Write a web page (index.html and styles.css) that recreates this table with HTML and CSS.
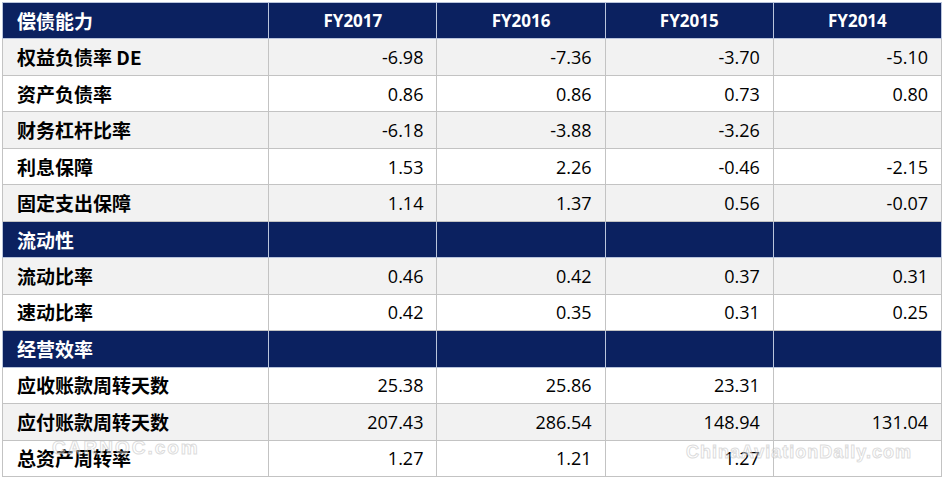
FILE: index.html
```html
<!DOCTYPE html>
<html lang="zh-CN">
<head>
<meta charset="utf-8">
<link rel="stylesheet" href="styles.css">
</head>
<body>
<div class="wrap">
<table class="ratios">
  <colgroup>
    <col class="c-label"><col class="c-year"><col class="c-year"><col class="c-year"><col class="c-year">
  </colgroup>
  <tr class="sec"><th class="lbl">偿债能力</th><th>FY2017</th><th>FY2016</th><th>FY2015</th><th>FY2014</th></tr>
  <tr class="alt"><td class="lbl">权益负债率 DE</td><td>-6.98</td><td>-7.36</td><td>-3.70</td><td>-5.10</td></tr>
  <tr><td class="lbl">资产负债率</td><td>0.86</td><td>0.86</td><td>0.73</td><td>0.80</td></tr>
  <tr class="alt"><td class="lbl">财务杠杆比率</td><td>-6.18</td><td>-3.88</td><td>-3.26</td><td></td></tr>
  <tr><td class="lbl">利息保障</td><td>1.53</td><td>2.26</td><td>-0.46</td><td>-2.15</td></tr>
  <tr class="alt"><td class="lbl">固定支出保障</td><td>1.14</td><td>1.37</td><td>0.56</td><td>-0.07</td></tr>
  <tr class="sec"><th class="lbl">流动性</th><th></th><th></th><th></th><th></th></tr>
  <tr class="alt"><td class="lbl">流动比率</td><td>0.46</td><td>0.42</td><td>0.37</td><td>0.31</td></tr>
  <tr><td class="lbl">速动比率</td><td>0.42</td><td>0.35</td><td>0.31</td><td>0.25</td></tr>
  <tr class="sec"><th class="lbl">经营效率</th><th></th><th></th><th></th><th></th></tr>
  <tr><td class="lbl">应收账款周转天数</td><td>25.38</td><td>25.86</td><td>23.31</td><td></td></tr>
  <tr class="alt"><td class="lbl">应付账款周转天数</td><td>207.43</td><td>286.54</td><td>148.94</td><td>131.04</td></tr>
  <tr><td class="lbl">总资产周转率</td><td>1.27</td><td>1.21</td><td>1.27</td><td></td></tr>
</table>
<span class="wm wm-left">CARNOC.com</span>
<span class="wm wm-right">ChinaAviationDaily.com</span>
</div>
</body>
</html>
```
FILE: styles.css
```css
html, body {
  margin: 0;
  padding: 0;
  background: #ffffff;
}
.wrap {
  position: relative;
  padding: 2px 0 0 2px;
  width: 942px;
  height: 478px;
  overflow: hidden;
}
.ratios {
  border-collapse: collapse;
  table-layout: fixed;
  width: 940px;
  font-family: "Open Sans", "Noto Sans CJK SC", sans-serif;
  font-size: 18px;
  color: #000;
}
.c-label { width: 266px; }
.c-year { width: 168px; }
.ratios td, .ratios th {
  height: 36.48px;
  padding: 0 13px 0 13px;
  border: 1px solid #c3c3c3;
  text-align: right;
  white-space: nowrap;
  line-height: 20px;
  box-sizing: border-box;
}
.ratios td { background: #ffffff; font-weight: 400; }
.ratios tr.alt td { background: #f2f2f2; }
.ratios .lbl {
  text-align: left;
  padding-left: 14px;
  font-family: "Noto Sans CJK SC", sans-serif;
  font-weight: 700;
  font-size: 19px;
}
.ratios tr.sec th {
  background: #0b2160;
  color: #ffffff;
  font-weight: 700;
  text-align: center;
  border-color: #b9c4dc;
  font-size: 17px;
}
.ratios tr.sec th.lbl {
  text-align: left;
  font-size: 19px;
}
.wm {
  position: absolute;
  font-family: "Liberation Sans", sans-serif;
  font-weight: 700;
  line-height: 1;
  color: rgba(255,255,255,0.4);
  -webkit-text-stroke: 1px rgba(185,185,185,0.5);
  pointer-events: none;
}
.wm-left { left: 52px; top: 438px; font-size: 19px; letter-spacing: 2px; }
.wm-right { left: 686px; top: 443px; font-size: 18px; letter-spacing: 1px; }
```
